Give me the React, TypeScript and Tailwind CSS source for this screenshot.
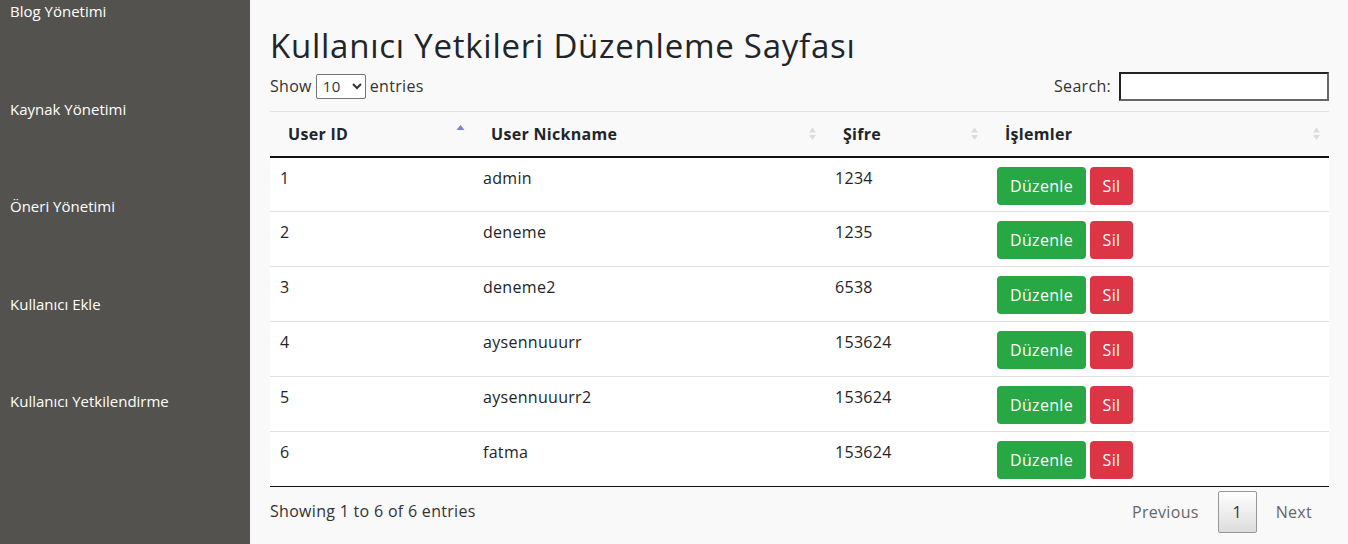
import React from 'react';

const menu = ['Blog Yönetimi', 'Kaynak Yönetimi', 'Öneri Yönetimi', 'Kullanıcı Ekle', 'Kullanıcı Yetkilendirme'];

const users = [
  { id: 1, nick: 'admin', pass: '1234' },
  { id: 2, nick: 'deneme', pass: '1235' },
  { id: 3, nick: 'deneme2', pass: '6538' },
  { id: 4, nick: 'aysennuuurr', pass: '153624' },
  { id: 5, nick: 'aysennuuurr2', pass: '153624' },
  { id: 6, nick: 'fatma', pass: '153624' },
];

const SortIcon: React.FC<{ active?: boolean }> = ({ active }) =>
  active ? (
    <svg width="9" height="14" viewBox="0 0 9 14" className="absolute right-[8px] top-[12px]">
      <path d="M4.5 1 L8.5 6 L0.5 6 Z" fill="#7b7fd6" />
    </svg>
  ) : (
    <svg width="9" height="14" viewBox="0 0 9 14" className="absolute right-[8px] top-[15px]">
      <path d="M4.5 0.5 L8 5.5 L1 5.5 Z" fill="#dcdcdc" />
      <path d="M4.5 13 L8 8 L1 8 Z" fill="#dcdcdc" />
    </svg>
  );

const Th: React.FC<{ label: string; width: string; active?: boolean }> = ({ label, width, active }) => (
  <th className={`relative ${width} text-left font-bold text-[16px] tracking-[0.3px] text-[#212529] pl-[18px] pr-[18px] h-[45px]`}>
    {label}
    <SortIcon active={active} />
  </th>
);

export default function App() {
  return (
    <div className="flex w-[1348px] h-[544px] overflow-hidden" style={{ fontFamily: '"Open Sans", "Liberation Sans", sans-serif' }}>
      <aside className="w-[250px] shrink-0 bg-[#53524e] pl-[10px]">
        {menu.map(m => (
          <div key={m} className="h-[97.5px] text-white text-[15px] leading-[23px]">{m}</div>
        ))}
      </aside>

      <main className="flex-1 bg-[#f9f9f9] pl-[20px] pr-[19px] pt-[24px] tracking-[0.3px]">
        <h1 className="text-[33px] leading-[44px] text-[#212529] tracking-[0.75px]">Kullanıcı Yetkileri Düzenleme Sayfası</h1>

        <div className="flex items-center justify-between h-[30px] mt-[3px] text-[#333] text-[16px]">
          <div className="flex items-center gap-[4px]">
            <span>Show</span>
            <select className="w-[50px] h-[25px] border border-[#767676] rounded-[2px] bg-white text-[15px] pl-[2px]" defaultValue="10">
              <option>10</option>
            </select>
            <span>entries</span>
          </div>
          <div className="flex items-center gap-[8px]">
            <span>Search:</span>
            <input className="w-[210px] h-[29px] border-2 border-t-[#222] border-l-[#222] border-r-[#666] border-b-[#666] bg-white" />
          </div>
        </div>

        <table className="w-full border-collapse mt-[10px]">
          <thead>
            <tr className="border-t border-[#e2e2e2] border-b-2 border-b-[#111]">
              <Th label="User ID" width="w-[203px]" active />
              <Th label="User Nickname" width="w-[352px]" />
              <Th label="Şifre" width="w-[162px]" />
              <Th label="İşlemler" width="w-[342px]" />
            </tr>
          </thead>
          <tbody className="bg-white">
            {users.map((u, i) => (
              <tr key={u.id} className={`h-[55px] ${i < users.length - 1 ? 'border-b border-[#e0e0e6]' : 'border-b border-[#111]'}`}>
                <td className="align-top pl-[10px] pt-[8px] text-[16px] text-[#212529]">{u.id}</td>
                <td className="align-top pl-[10px] pt-[8px] text-[16px] text-[#212529]">{u.nick}</td>
                <td className="align-top pl-[10px] pt-[8px] text-[16px] text-[#212529]">{u.pass}</td>
                <td className="align-top pl-[10px] pt-[9px]">
                  <div className="flex gap-[4px]">
                    <button className="h-[38px] w-[89px] rounded-[4px] bg-[#28a745] text-white text-[16px]">Düzenle</button>
                    <button className="h-[38px] w-[43px] rounded-[4px] bg-[#dc3545] text-white text-[16px]">Sil</button>
                  </div>
                </td>
              </tr>
            ))}
          </tbody>
        </table>

        <div className="flex items-start justify-between mt-[4px] text-[16px]">
          <div className="pt-[8px] text-[#333]">Showing 1 to 6 of 6 entries</div>
          <div className="flex items-center text-[#666]">
            <span className="px-[19px]">Previous</span>
            <span className="w-[39px] h-[42px] flex items-center justify-center border border-[#979797] rounded-[2px] bg-gradient-to-b from-white to-[#dcdcdc] text-[#333]">1</span>
            <span className="pl-[19px] pr-[17px]">Next</span>
          </div>
        </div>
      </main>
    </div>
  );
}
